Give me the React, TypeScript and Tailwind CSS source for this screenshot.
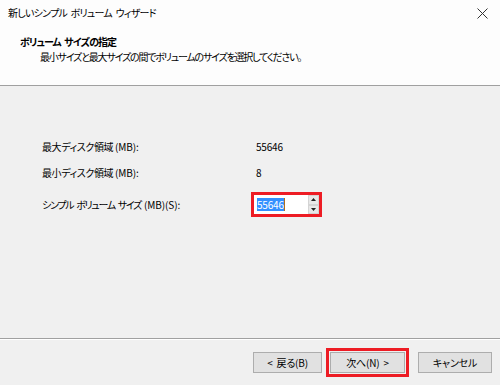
import { ReactNode } from "react";

const font =
  "font-['Noto_Sans_CJK_JP','Noto_Sans',sans-serif] [font-feature-settings:'palt'] tracking-[-0.6px]";

function WinButton({ children, className }: { children: ReactNode; className?: string }) {
  return (
    <div
      className={`flex h-[21px] items-center justify-center border border-[#adadad] bg-[#e1e1e1] tracking-[-0.2px] text-black [word-spacing:2px] ${className ?? ""}`}
    >
      {children}
    </div>
  );
}

function SpinArrow({ up }: { up?: boolean }) {
  return (
    <div className="flex h-[10px] w-[11px] items-center justify-center border border-[#d4d4d4] bg-[#e8e8e8]">
      <svg width="5" height="3" viewBox="0 0 5 3">
        <path d={up ? "M2.5 0 L5 3 L0 3 Z" : "M0 0 L5 0 L2.5 3 Z"} fill="#222" />
      </svg>
    </div>
  );
}

function Label({ jp, en, jpTrack }: { jp: string; en: string; jpTrack: string }) {
  return (
    <span className="whitespace-pre">
      <span className={jpTrack}>{jp}</span>
      <span className="tracking-[-0.1px]">{en}</span>
    </span>
  );
}

export default function App() {
  return (
    <div className={`flex h-[385px] w-[500px] flex-col bg-[#f0f0f0] text-[10px] text-black ${font}`}>
      {/* header */}
      <div className="h-[86px] shrink-0 border-b border-[#a0a0a0] bg-[#fdfdfd]">
        <div className="flex h-[26px] items-center justify-between pl-[8px] pr-[10px]">
          <span className="leading-none tracking-[-0.75px] [word-spacing:2px]">
            新しいシンプル ボリューム ウィザード
          </span>
          <svg width="11" height="11" viewBox="0 0 11 11" className="mr-[2px]">
            <path d="M0.5 0.5 L10.5 10.5 M10.5 0.5 L0.5 10.5" stroke="#333" strokeWidth="1" />
          </svg>
        </div>
        <p className="mt-[8px] pl-[20px] font-bold leading-[15px] tracking-[-0.95px] [word-spacing:2px]">
          ボリューム サイズの指定
        </p>
        <p className="pl-[40px] leading-[15px] tracking-[-1.2px]">
          最小サイズと最大サイズの間でボリュームのサイズを選択してください。
        </p>
      </div>

      {/* body */}
      <div className="flex-1 pl-[42px] pt-[52px]">
        <div className="flex h-[16px] items-center">
          <div className="w-[214px]">
            <Label jp="最大ディスク領域 " en="(MB):" jpTrack="tracking-[-0.4px]" />
          </div>
          <span className="tracking-[-0.2px]">55646</span>
        </div>
        <div className="mt-[10px] flex h-[16px] items-center">
          <div className="w-[214px]">
            <Label jp="最小ディスク領域 " en="(MB):" jpTrack="tracking-[-0.4px]" />
          </div>
          <span>8</span>
        </div>
        <div className="mt-[12px] flex items-center">
          <div className="w-[209px]">
            <Label
              jp="シンプル ボリューム サイズ "
              en="(MB)(S):"
              jpTrack="tracking-[-1.3px] [word-spacing:2px]"
            />
          </div>
          <div className="flex h-[25px] w-[71px] border-[3px] border-[#ed1c24] bg-white">
            <div className="flex flex-1 items-center pl-[3px]">
              <span className="bg-[#3390ff] leading-[13px] tracking-[-0.2px] text-white">55646</span>
              <span className="h-[13px] w-px bg-[#b0701c]" />
            </div>
            <div className="flex flex-col justify-center">
              <SpinArrow up />
              <SpinArrow />
            </div>
          </div>
        </div>
      </div>

      {/* footer */}
      <div className="flex h-[47px] shrink-0 items-center justify-end border-t border-[#a0a0a0] pr-[8px] shadow-[inset_0_1px_0_#ffffff]">
        <WinButton className="w-[69px]">&lt; 戻る(B)</WinButton>
        <div className="ml-[4px] border-[3px] border-[#ed1c24] p-px">
          <WinButton className="w-[75px]">次へ(N) &gt;</WinButton>
        </div>
        <WinButton className="ml-[9px] w-[74px]">キャンセル</WinButton>
      </div>
    </div>
  );
}
